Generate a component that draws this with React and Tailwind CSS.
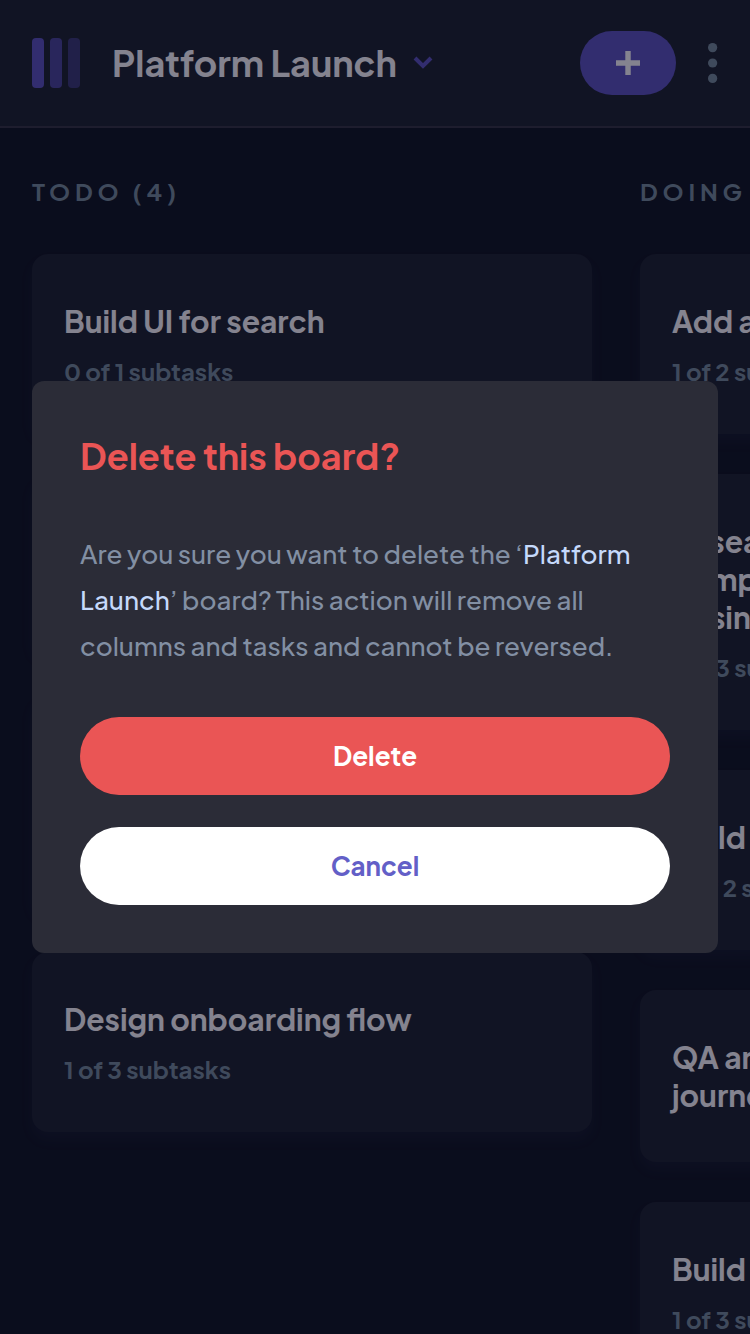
import React from "react";

const columns = [
  {
    name: "Todo",
    count: 4,
    tasks: [
      { title: "Build UI for search", progress: "0 of 1 subtasks" },
      { title: "Build settings UI", progress: "0 of 2 subtasks" },
      { title: "QA and test all major user\njourneys", progress: "0 of 2 subtasks" },
      { title: "Design onboarding flow", progress: "1 of 3 subtasks" },
    ],
  },
  {
    name: "Doing",
    count: 6,
    tasks: [
      { title: "Add authentication endpoints", progress: "1 of 2 subtasks" },
      {
        title: "Research pricing points of\ncompetitors and trial different\nbusiness models",
        progress: "1 of 3 subtasks",
      },
      { title: "Build settings UI", progress: "0 of 2 subtasks" },
      { title: "QA and test all major user\njourneys" },
      { title: "Build UI for onboarding flow", progress: "1 of 3 subtasks" },
    ],
  },
];

function Logo() {
  return (
    <svg viewBox="0 0 48 50" className="h-[50px] w-12 shrink-0 fill-[#5a52be]" aria-hidden="true">
      <rect width="12" height="50" rx="4" />
      <rect x="18" width="12" height="50" rx="4" opacity="0.75" />
      <rect x="36" width="12" height="50" rx="4" opacity="0.5" />
    </svg>
  );
}

function Header() {
  return (
    <header className="flex h-32 shrink-0 items-center border-b-2 border-[#33323c] bg-[#192028] px-8">
      <Logo />
      <button type="button" className="ml-8 flex items-center gap-4">
        <h1 className="text-[36px] leading-[46px] font-bold whitespace-nowrap text-white">Platform Launch</h1>
        <svg viewBox="0 0 10 7" className="h-[14px] w-5" fill="none" aria-hidden="true">
          <path d="m1 1 4 4 4-4" stroke="#5a52be" strokeWidth="2" />
        </svg>
      </button>
      <div className="ml-auto flex items-center gap-8">
        <button
          type="button"
          aria-label="Add new task"
          className="flex h-16 w-24 items-center justify-center rounded-full bg-[#5a52be]"
        >
          <svg viewBox="0 0 12 12" className="size-6 fill-white" aria-hidden="true">
            <path d="M7.368 12V7.344H12V4.632H7.368V0H4.656v4.632H0v2.712h4.656V12z" />
          </svg>
        </button>
        <button type="button" aria-label="Board options">
          <svg viewBox="0 0 5 20" className="h-10 w-[10px] fill-[#758c98]" aria-hidden="true">
            <circle cx="2.308" cy="2.308" r="2.308" />
            <circle cx="2.308" cy="10" r="2.308" />
            <circle cx="2.308" cy="17.692" r="2.308" />
          </svg>
        </button>
      </div>
    </header>
  );
}

function TaskCard({ task }) {
  return (
    <li className="rounded-2xl bg-[#192028] px-8 py-12 shadow-[0_8px_12px_rgba(54,78,126,0.1)]">
      <h3 className="text-[30px] leading-[38px] font-bold whitespace-pre-line text-white">{task.title}</h3>
      {task.progress && (
        <p className="mt-4 text-[24px] leading-[30px] font-bold text-[#758c98]">{task.progress}</p>
      )}
    </li>
  );
}

function Column({ column }) {
  return (
    <section className="w-[560px] shrink-0">
      <h2 className="text-[24px] leading-[30px] font-bold tracking-[0.2em] whitespace-nowrap text-[#758c98] uppercase">
        {column.name} ({column.count})
      </h2>
      <ul className="mt-12 flex flex-col gap-10">
        {column.tasks.map((task) => (
          <TaskCard key={task.title} task={task} />
        ))}
      </ul>
    </section>
  );
}

function DeleteDialog() {
  return (
    <div className="fixed inset-0 flex items-center justify-center bg-[#090820]/50 p-8">
      <div
        role="dialog"
        aria-modal="true"
        aria-labelledby="delete-title"
        aria-describedby="delete-text"
        className="w-full max-w-4xl rounded-xl bg-[#2b2c37] p-12"
      >
        <h2 id="delete-title" className="text-[36px] leading-[54px] font-bold text-[#ea5555]">
          Delete this board?
        </h2>
        <p id="delete-text" className="mt-12 text-[26px] leading-[46px] font-medium text-[#828fa3]">
          Are you sure you want to delete the ‘<span className="text-[#c5d9fb]">Platform Launch</span>’ board? This
          action will remove all columns and tasks and cannot be reversed.
        </p>
        <div className="mt-12 flex flex-col gap-8">
          <button type="button" className="h-[78px] rounded-full bg-[#ea5555] pb-0.5 text-[26px] font-bold text-white">
            Delete
          </button>
          <button type="button" className="h-[78px] rounded-full bg-white pb-0.5 text-[26px] font-bold text-[#635fc7]">
            Cancel
          </button>
        </div>
      </div>
    </div>
  );
}

export default function App() {
  return (
    <div className="flex h-screen flex-col overflow-hidden bg-[#0b121a] font-['Plus_Jakarta_Sans','Inter',sans-serif]">
      <Header />
      <main className="flex min-h-0 flex-1 gap-12 overflow-hidden px-8 pt-12">
        {columns.map((column) => (
          <Column key={column.name} column={column} />
        ))}
      </main>
      <DeleteDialog />
    </div>
  );
}
